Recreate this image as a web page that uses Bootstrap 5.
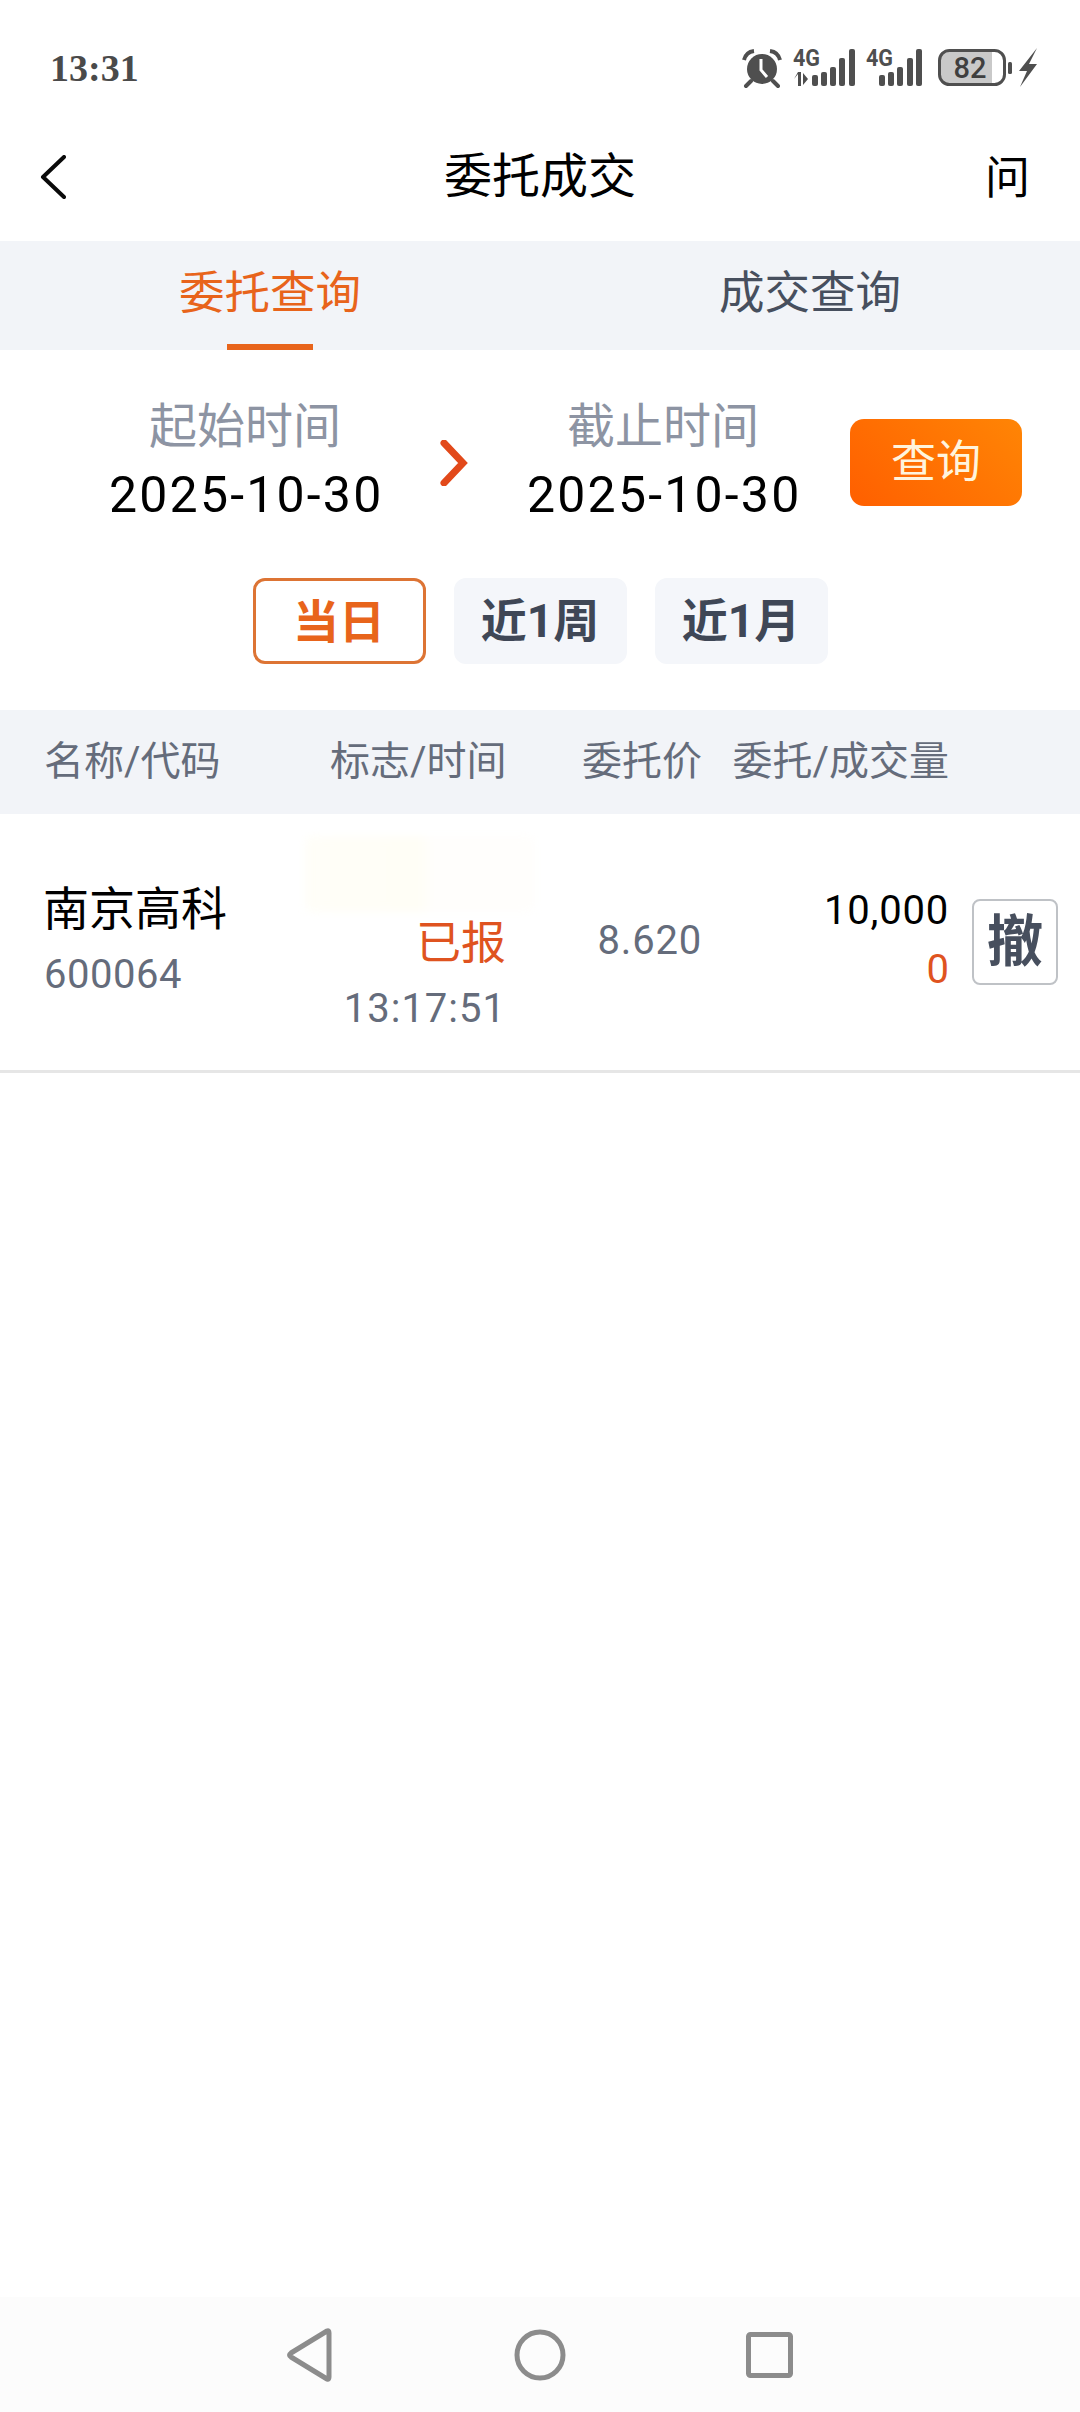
<!DOCTYPE html>
<html lang="zh-CN">
<head>
<meta charset="utf-8">
<title>委托成交</title>
<link rel="stylesheet" href="https://cdn.jsdelivr.net/npm/bootstrap@5.3.0/dist/css/bootstrap.min.css">
<style>
html,body{width:1080px;height:2412px;margin:0;overflow:hidden;background:#fff}
body{font-family:Roboto,"Noto Sans CJK SC",sans-serif;color:#000}
.page-wrap{height:2412px}
.status-strip{height:118px;padding:46px 38px 0 50px}
.clock-text{font-family:"Liberation Serif",serif;font-weight:700;font-size:38px;line-height:44px;color:#4a4a4a}
.status-icons{height:44px}
.top-nav{height:123px;padding:0 50px 0 40px}
.nav-back{margin-top:-6px}
.nav-title{font-size:48px;line-height:60px;position:absolute;left:0;right:0;top:29px;text-align:center}
.nav-q{font-size:45px;line-height:60px;margin-top:-1px}
.tab-strip{height:109px;background:#f2f4f8}
.tab-cell{font-size:45.500px;line-height:60px;color:#474f5e;padding-top:23px;text-align:center;position:relative}
.tab-cell.is-on{color:#e8641b}
.tab-cell.is-on::after{content:"";position:absolute;left:50%;bottom:0;width:86px;height:6px;margin-left:-43px;background:#e8641b}
.date-row{padding:47px 58px 0 109px}
.date-col{width:272px;text-align:center}
.date-label{font-size:48px;line-height:60px;color:#8d94a3;white-space:nowrap}
.date-value{font-size:50px;line-height:60px;color:#000;margin-top:8px;white-space:nowrap;letter-spacing:2.2px}
.arrow-col{width:146px;margin-top:4px}
.query-btn{width:172px;height:87px;border:0;border-radius:14px;background:linear-gradient(45deg,#ff5f00,#ff8505);color:#fff4dc;font-size:45px;line-height:87px;padding:0;margin-left:51px;margin-top:2px}
.range-row{padding-top:53px;gap:28px;padding-left:0}
.range-btn{width:173px;height:86px;border-radius:12px;background:#f4f6fa;color:#3f4756;font-size:46px;font-weight:700;line-height:82px;border:2px solid #f4f6fa;padding:0;text-align:center}
.range-btn.is-on{background:#fff;border:3px solid #dd7434;color:#e8641b}
.head-grid,.order-grid{display:grid;grid-template-columns:286px 176px 196px 247px 24px 85px;padding-left:44px}
.head-grid{margin-top:46px;height:104px;background:#f2f4f8;font-size:40px;line-height:104px;color:#656c7b;white-space:nowrap}
.cell-end{text-align:right}
.order-grid{height:259px;border-bottom:3px solid #e6e6e6;position:relative}
.stock-name{font-size:46px;line-height:56px;margin-top:67px;margin-left:-1px}
.stock-code{font-size:40px;line-height:48px;color:#656c7b;margin-top:14px;letter-spacing:.5px}
.flag-blob{position:absolute;left:305px;top:22px;width:230px;height:76px;background:linear-gradient(90deg,#fffef8 0%,#fffef6 50%,#fffefc 55%,#fffefc 100%);border-radius:8px;filter:blur(4px)}
.flag-text{font-size:45px;line-height:56px;color:#df5320;margin-top:102px;position:relative}
.flag-time{font-size:40px;line-height:48px;color:#656c7b;margin-top:13px;letter-spacing:1px}
.price-text{font-size:40px;line-height:48px;color:#656c7b;margin-top:103px;letter-spacing:.8px}
.qty-one{font-size:40px;line-height:48px;margin-top:73px;letter-spacing:.8px}
.qty-two{font-size:40px;line-height:48px;color:#df5320;margin-top:11px}
.cancel-btn{grid-column:6;width:86px;height:86px;margin-top:85px;margin-left:-1px;border:2px solid #bfc2c6;border-radius:8px;background:#fff;color:#474f5e;font-size:56px;font-weight:700;line-height:80px;text-align:center;padding:0}
.gesture-bar{position:absolute;left:0;right:0;bottom:0;height:115px;background:#fcfcfc}
</style>
</head>
<body>
<div class="page-wrap d-flex flex-column position-relative">
  <div class="status-strip d-flex justify-content-between align-items-start">
    <div class="clock-text">13:31</div>
    <svg class="status-icons" width="300" height="44" viewBox="0 0 300 44" fill="#4f4f4f" font-family="Roboto,sans-serif" font-weight="700">
      <g transform="translate(0,3)">
        <circle cx="20" cy="20" r="15"/>
        <path d="M2 11 Q4 3 12 2 M28 2 Q36 3 38 11" fill="none" stroke="#4f4f4f" stroke-width="4"/>
        <path d="M9 32 L4 37 M31 32 L36 37" stroke="#4f4f4f" stroke-width="4" stroke-linecap="round"/>
        <path d="M19 10 V21 L25 28" fill="none" stroke="#fff" stroke-width="3"/>
      </g>
      <text x="51" y="20" font-size="23" textLength="27" lengthAdjust="spacingAndGlyphs">4G</text>
      <path d="M52 33 l4 -5 v12 h3 v-14 h-3 z M61 27 l5 6 l-5 6 z"/>
      <rect x="70" y="29" width="6" height="11" rx="2"/><rect x="79" y="26" width="6" height="14" rx="2"/><rect x="88" y="21" width="6" height="19" rx="2"/><rect x="97" y="12" width="6" height="28" rx="2"/><rect x="107" y="3" width="6" height="37" rx="2"/>
      <text x="124" y="20" font-size="23" textLength="27" lengthAdjust="spacingAndGlyphs">4G</text>
      <rect x="137" y="29" width="6" height="11" rx="2"/><rect x="146" y="26" width="6" height="14" rx="2"/><rect x="155" y="21" width="6" height="19" rx="2"/><rect x="165" y="12" width="6" height="28" rx="2"/><rect x="174" y="3" width="6" height="37" rx="2"/>
      <path d="M204 5 H250 V37 H204 Q198 37 198 31 V11 Q198 5 204 5 z" fill="#c9c9c9"/>
      <rect x="197.500" y="4.500" width="65" height="34" rx="10" fill="none" stroke="#4f4f4f" stroke-width="3"/>
      <text x="228" y="32" font-size="29" font-weight="500" text-anchor="middle" fill="#3f3f3f">82</text>
      <rect x="266" y="16" width="4" height="12" rx="1.500"/>
      <path d="M295 2 L277 25 H285 L278 41 L295 18 H287 z"/>
    </svg>
  </div>
  <nav class="top-nav d-flex justify-content-between align-items-center position-relative">
    <svg class="nav-back" width="26" height="44" viewBox="0 0 26 44"><path d="M24 2 L3 22 L24 42" fill="none" stroke="#0a0a0a" stroke-width="4" stroke-linecap="round" stroke-linejoin="round"/></svg>
    <div class="nav-title">委托成交</div>
    <div class="nav-q">问</div>
  </nav>
  <div class="tab-strip row g-0">
    <div class="col-6 tab-cell is-on">委托查询</div>
    <div class="col-6 tab-cell">成交查询</div>
  </div>
  <div class="date-row d-flex align-items-center">
    <div class="date-col"><div class="date-label">起始时间</div><div class="date-value">2025-10-30</div></div>
    <div class="arrow-col d-flex justify-content-center">
      <svg width="28" height="46" viewBox="0 0 28 46"><path d="M4 3 L23 23 L4 43" fill="none" stroke="#e2491a" stroke-width="7" stroke-linecap="round"/></svg>
    </div>
    <div class="date-col"><div class="date-label">截止时间</div><div class="date-value">2025-10-30</div></div>
    <button class="btn query-btn" type="button">查询</button>
  </div>
  <div class="range-row d-flex justify-content-center">
    <button class="btn range-btn is-on" type="button">当日</button>
    <button class="btn range-btn" type="button">近1周</button>
    <button class="btn range-btn" type="button">近1月</button>
  </div>
  <div class="head-grid">
    <div>名称/代码</div>
    <div class="cell-end">标志/时间</div>
    <div class="cell-end">委托价</div>
    <div class="cell-end">委托/成交量</div>
  </div>
  <div class="order-grid">
    <div class="flag-blob"></div>
    <div><div class="stock-name">南京高科</div><div class="stock-code">600064</div></div>
    <div class="cell-end"><div class="flag-text">已报</div><div class="flag-time">13:17:51</div></div>
    <div class="cell-end"><div class="price-text">8.620</div></div>
    <div class="cell-end"><div class="qty-one">10,000</div><div class="qty-two">0</div></div>
    <button class="btn cancel-btn" type="button">撤</button>
  </div>
  <div class="gesture-bar d-flex">
    <svg width="1080" height="115" viewBox="0 0 1080 115" fill="none" stroke="#8c8c8c" stroke-width="5" stroke-linejoin="round">
      <path d="M327 34 L291 56 Q288 58 291 60 L327 82 Q329 83 329 80 V36 Q329 33 327 34 z"/>
      <circle cx="540" cy="58" r="23"/>
      <rect x="748.500" y="37.500" width="42" height="41" rx="2"/>
    </svg>
  </div>
</div>
<script src="https://cdn.jsdelivr.net/npm/bootstrap@5.3.0/dist/js/bootstrap.bundle.min.js"></script>
</body>
</html>
